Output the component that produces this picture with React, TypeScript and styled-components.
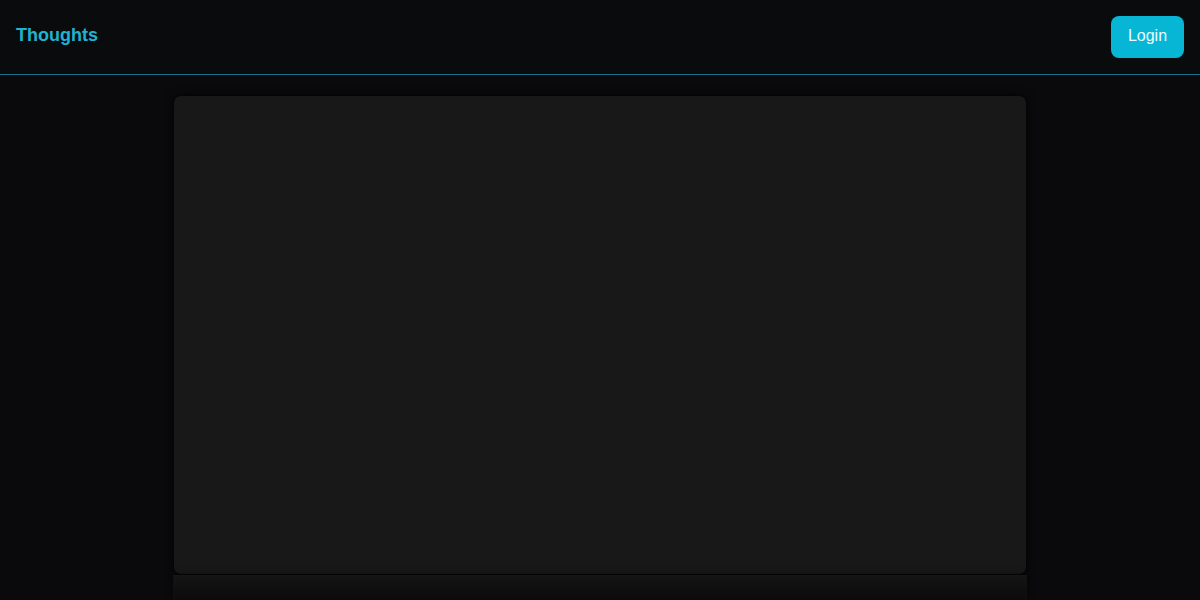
import styled, { createGlobalStyle } from "styled-components";

const GlobalStyle = createGlobalStyle`
    html, body {
        margin: 0;
        padding: 0;
        background-color: #0a0a0c;
        font-family: "Liberation Sans", Arial, sans-serif;
    }
`;

const App = () => {
    return (
        <>
            <GlobalStyle />
            <Page>
                <Header>
                    <Logo>Thoughts</Logo>
                    <LoginButton>Login</LoginButton>
                </Header>
                <Main>
                    <Card />
                    <CardFooter />
                </Main>
            </Page>
        </>
    );
};

export default App;

const Page = styled.div`
    height: 600px;
    background-color: #0a0a0c;
    overflow: hidden;
`;

const Header = styled.header`
    height: 75px;
    padding: 0 16px 1px;
    box-sizing: border-box;
    display: flex;
    align-items: center;
    justify-content: space-between;
    background-color: #0a0b0d;
    border-bottom: 1px solid #1a7090;
`;

const Logo = styled.div`
    font-size: 18px;
    font-weight: bold;
    color: #1fb3d1;
    margin-top: -2px;
`;

const LoginButton = styled.button`
    width: 73px;
    height: 42px;
    padding: 0 0 2px;
    border: none;
    border-radius: 8px;
    background-color: #06b6d4;
    color: #ecfeff;
    font-family: "Liberation Sans", Arial, sans-serif;
    font-size: 16px;
    cursor: pointer;
`;

const Main = styled.main`
    width: 854px;
    margin: 20px auto 0;
    display: flex;
    flex-direction: column;
`;

const Card = styled.div`
    height: 480px;
    box-sizing: border-box;
    background-color: #181818;
    border: 1px solid #050505;
    border-radius: 8px;
    box-shadow: 0 0 8px rgba(0, 0, 0, 0.7);
`;

const CardFooter = styled.div`
    height: 60px;
    background: linear-gradient(#151515, #0b0b0b 40%);
    border-left: 1px solid #111;
    border-right: 1px solid #111;
    box-shadow: 0 0 6px rgba(0, 0, 0, 0.6);
`;
